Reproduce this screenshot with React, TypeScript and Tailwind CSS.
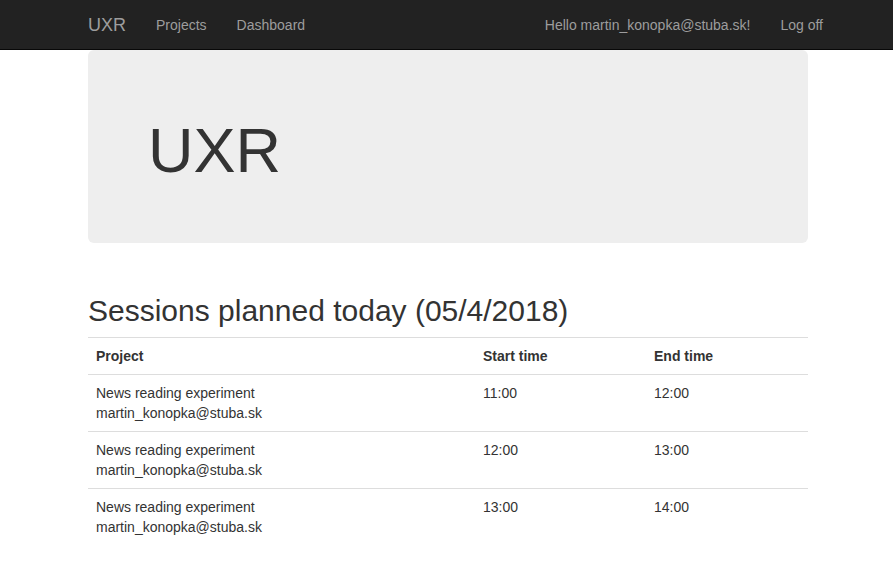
import React from "react";

const rows = [
  { start: "11:00", end: "12:00" },
  { start: "12:00", end: "13:00" },
  { start: "13:00", end: "14:00" },
];

export default function App() {
  return (
    <div
      className="min-h-[584px] bg-white text-[14px] leading-[20px] text-[#333]"
      style={{ fontFamily: '"Liberation Sans", Arial, sans-serif' }}
    >
      <nav className="h-[50px] border-b border-[#080808] bg-[#222]">
        <div className="ml-[88px] flex h-[49px] w-[720px] items-start">
          <a className="-ml-[15px] px-[15px] py-[15px] text-[18px] leading-[20px] text-[#9d9d9d]">UXR</a>
          <a className="px-[15px] py-[15px] text-[#9d9d9d]">Projects</a>
          <a className="px-[15px] py-[15px] text-[#9d9d9d]">Dashboard</a>
          <div className="-mr-[30px] ml-auto flex">
            <a className="px-[15px] py-[15px] text-[#9d9d9d]">Hello martin_konopka@stuba.sk!</a>
            <a className="px-[15px] py-[15px] text-[#9d9d9d]">Log off</a>
          </div>
        </div>
      </nav>

      <div className="ml-[88px] w-[720px]">
        <div className="mb-[30px] rounded-[6px] bg-[#eee] px-[60px] pb-[48px] pt-[46px]">
          <h1 className="mb-[10px] mt-[20px] text-[63px] font-normal leading-[69px]">UXR</h1>
        </div>

        <h2 className="mb-[10px] mt-[51px] text-[30px] font-normal leading-[33px]">
          Sessions planned today (05/4/2018)
        </h2>

        <table className="w-full border-collapse">
          <thead>
            <tr>
              <th className="w-[387px] border-b border-t border-[#ddd] p-[8px] text-left font-bold">Project</th>
              <th className="w-[171px] border-b border-t border-[#ddd] p-[8px] text-left font-bold">Start time</th>
              <th className="border-b border-t border-[#ddd] p-[8px] text-left font-bold">End time</th>
            </tr>
          </thead>
          <tbody>
            {rows.map((r, i) => (
              <tr key={i}>
                <td className={`p-[8px] align-top ${i > 0 ? "border-t border-[#ddd]" : ""}`}>
                  News reading experiment
                  <br />
                  martin_konopka@stuba.sk
                </td>
                <td className={`p-[8px] align-top ${i > 0 ? "border-t border-[#ddd]" : ""}`}>{r.start}</td>
                <td className={`p-[8px] align-top ${i > 0 ? "border-t border-[#ddd]" : ""}`}>{r.end}</td>
              </tr>
            ))}
          </tbody>
        </table>
      </div>
    </div>
  );
}
